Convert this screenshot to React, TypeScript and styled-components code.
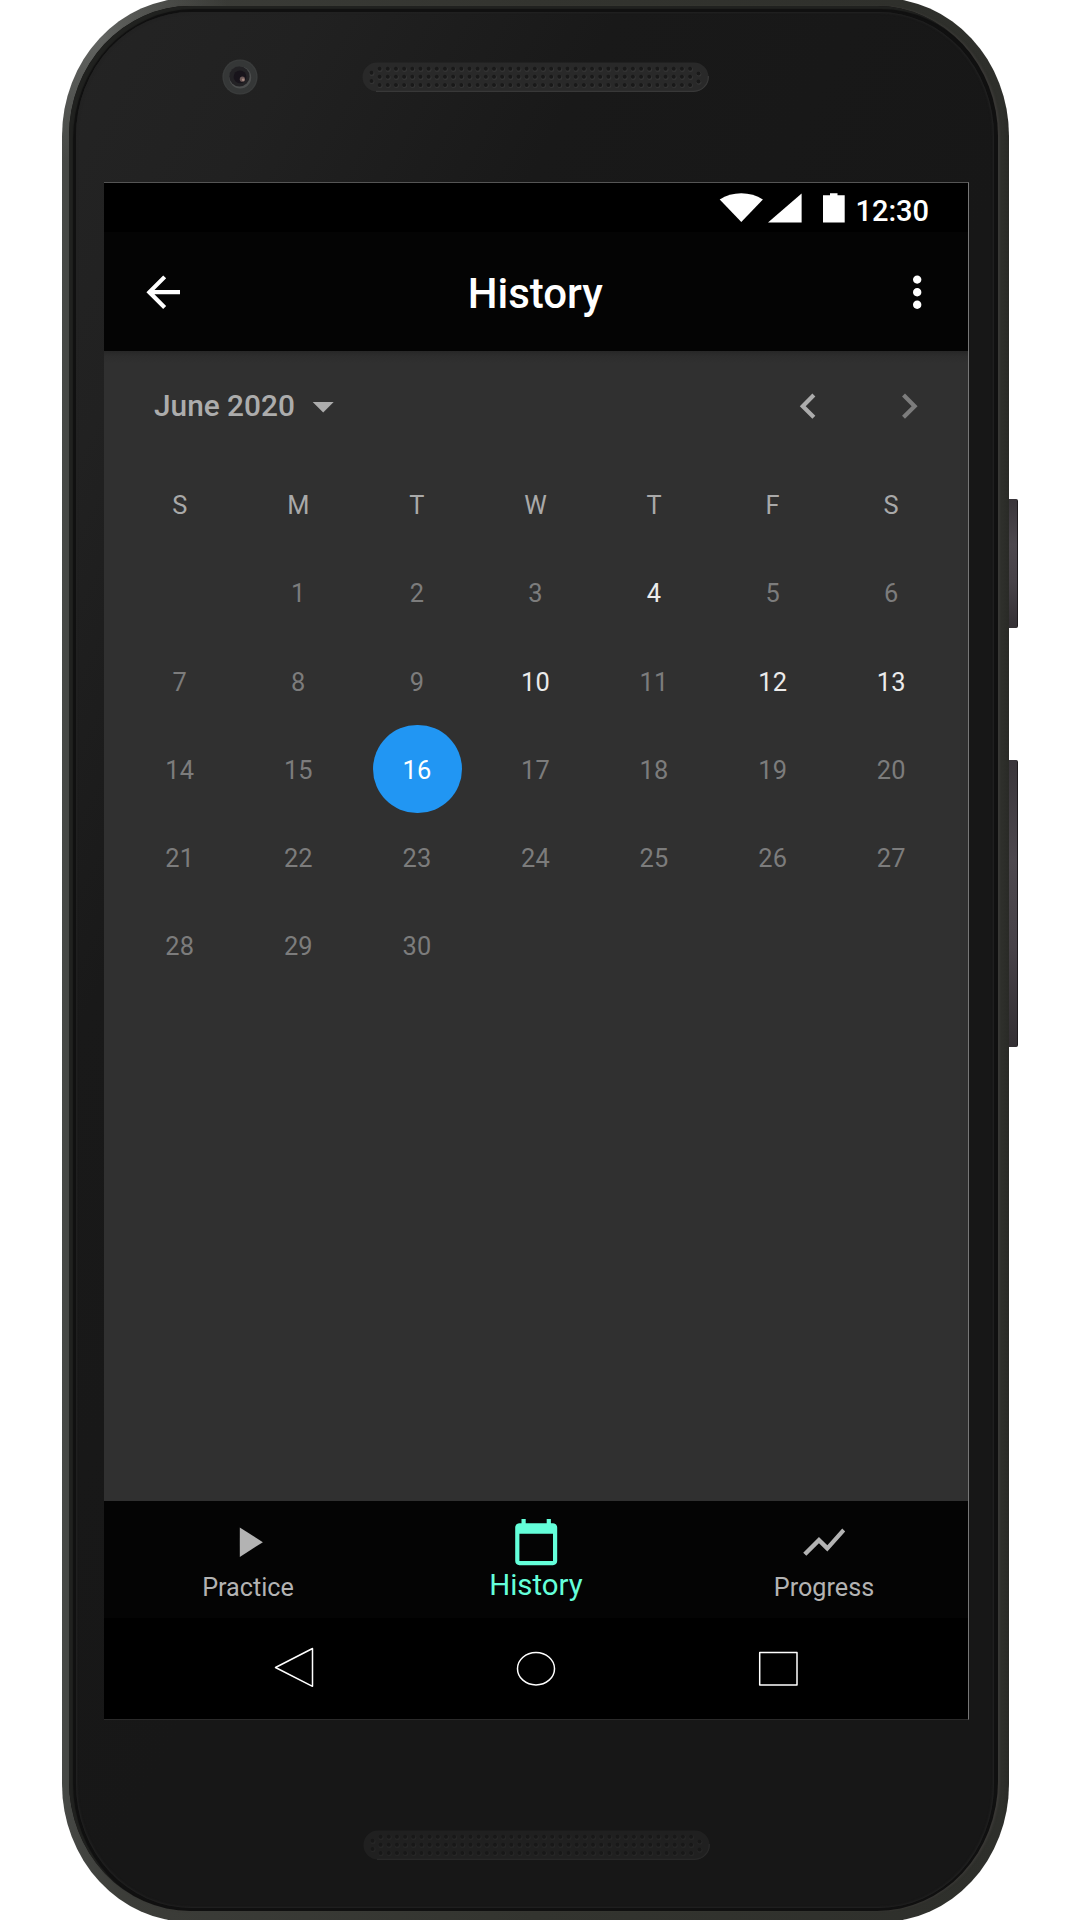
import React from "react";
import styled, { createGlobalStyle } from "styled-components";

const GlobalStyle = createGlobalStyle`
  * { box-sizing: border-box; }
  body { margin: 0; background: #fff; font-family: Roboto, "Noto Sans", sans-serif; }
`;

const Stage = styled.main`
  width: 1080px;
  height: 1920px;
  overflow: hidden;
  display: flex;
  align-items: flex-start;
  padding-left: 62px;
  background: #fff;
`;

const Shell = styled.div`
  width: 947px;
  height: 1924px;
  margin-top: -2px;
  flex: none;
  padding: 8px 11px 11px 7px;
  border-radius: 128px / 138px;
  background:
    radial-gradient(circle at 40px 40px, rgba(120, 122, 120, 0.6), rgba(90, 92, 90, 0) 130px),
    linear-gradient(90deg, #464845 0, #3c3d39 60px, #33342f 50%, #2e2f2b 99.3%, #292a26 100%);
`;

const Ring = styled.div`
  width: 100%;
  height: 100%;
  padding: 6px 4px 3px 7px;
  border-radius: 121px / 130px;
  background: #101010;
  box-shadow: inset 4px 3px 1px #20211f, 2px 0 2px rgba(66, 64, 61, 0.6);
`;

const Glass = styled.div`
  width: 100%;
  height: 100%;
  display: flex;
  flex-direction: column;
  padding-left: 28px;
  border-radius: 115px / 124px;
  background: linear-gradient(118deg, #242424 0, #212121 210px, #191919 480px, #171717 900px);
  box-shadow: inset 0 0 2px 1px #222;
`;

const Earpiece = styled.div`
  height: 170px;
  flex: none;
  display: flex;
  align-items: flex-start;
  padding: 46.7px 0 0 117.7px;
  gap: 104.8px;
`;

const Lens = styled.svg`
  width: 36px;
  height: 36px;
  flex: none;
`;

const GrillSvg = styled.svg<{ $dim?: boolean }>`
  width: 347px;
  height: 30px;
  margin-top: 3.300px;
  flex: none;
  opacity: ${(p) => (p.$dim ? 0.55 : 1)};
`;

const Chin = styled.div`
  flex: 1;
  padding: 106.5px 0 0 258.500px;
`;

const Screen = styled.div`
  width: 865px;
  height: 1538px;
  flex: none;
  display: flex;
  flex-direction: column;
  border-top: 1px solid #555;
  border-right: 1px solid #777;
  border-bottom: 1px solid #2a2a2a;
  background: #303030;
`;

const StatusBar = styled.div`
  height: 49px;
  display: flex;
  align-items: flex-start;
  justify-content: flex-end;
  padding: 10px 39px 0 0;
  background: #000;
  color: #fff;
`;

const StatusIcons = styled.svg`
  width: 126px;
  height: 30px;
  margin-right: 10px;
`;

const Clock = styled.span`
  font-size: 29px;
  font-weight: 500;
  line-height: 34px;
  padding-top: 1px;
`;

const AppBar = styled.header`
  height: 119px;
  display: grid;
  grid-template-columns: 50px 1fr 50px;
  align-items: center;
  padding: 2px 26px 0 33.5px;
  background: #040404;
  color: #fff;
`;

const Title = styled.h1`
  margin: 3px 0 0;
  padding-right: 9px;
  font-size: 42px;
  font-weight: 500;
  line-height: 50px;
  text-align: center;
`;

const Icon = styled.svg<{ $color?: string }>`
  display: block;
  width: 50.4px;
  height: 50.4px;
  flex: none;
  fill: ${(p) => p.$color || "#fff"};
`;

const Content = styled.section`
  height: 1150px;
  flex: none;
  padding: 0 17px;
  background: linear-gradient(180deg, #272727 0, #2d2d2d 5px, #303030 12px);
`;

const MonthBar = styled.div`
  height: 109.6px;
  display: flex;
  align-items: center;
  padding: 0 17px 0 33px;
`;

const Month = styled.span`
  width: 143.5px;
  font-size: 29.8px;
  font-weight: 500;
  line-height: 36px;
  color: #acacac;
  white-space: nowrap;
`;

const MonthArrows = styled.div`
  display: flex;
  gap: 50.4px;
  margin-left: auto;
`;

const Grid = styled.div`
  display: grid;
  grid-template-columns: repeat(7, 1fr);
  grid-auto-rows: 88.2px;
  place-items: center;
`;

type Tone = "head" | "off" | "on" | "picked";
const toneColor: Record<Tone, string> = {
  head: "#a9a9a9",
  off: "#7c7c7c",
  on: "#ebebeb",
  picked: "#fff",
};

const Day = styled.span<{ $tone: Tone }>`
  width: 88.4px;
  height: 88.4px;
  border-radius: 50%;
  display: flex;
  align-items: center;
  justify-content: center;
  padding: 1px 1px 0 0;
  font-size: 25.4px;
  letter-spacing: 0.2px;
  color: ${(p) => toneColor[p.$tone]};
  background: ${(p) => (p.$tone === "picked" ? "#2196f3" : "transparent")};
`;

const Tabs = styled.nav`
  height: 117px;
  display: grid;
  grid-template-columns: repeat(3, 1fr);
  background: #040404;
`;

const Tab = styled.div<{ $active?: boolean }>`
  display: flex;
  flex-direction: column;
  align-items: center;
  padding-top: 15.8px;
  font-size: ${(p) => (p.$active ? 29.4 : 25.2)}px;
  line-height: 36px;
  color: ${(p) => (p.$active ? "#64ffda" : "#b3b3b3")};
`;

const TabLabel = styled.span<{ $active?: boolean }>`
  margin-top: ${(p) => (p.$active ? -0.2 : 2.6)}px;
`;

const SystemBar = styled.div`
  flex: 1;
  display: flex;
  justify-content: center;
  gap: 202px;
  padding-top: 28px;
  background: #000;
`;

const SystemIcon = styled.svg`
  width: 40px;
  height: 44px;
  fill: none;
  stroke: #fff;
  stroke-width: 1.5;
  stroke-linejoin: round;
`;

const SideKeys = styled.div`
  width: 9px;
  display: flex;
  flex-direction: column;
  gap: 132px;
  padding-top: 498.5px;
`;

const SideKey = styled.div<{ $h: number }>`
  height: ${(p) => p.$h}px;
  border-radius: 0 2px 2px 0;
  border-right: 1px solid #1d1a1d;
  background: linear-gradient(180deg, #39353a 0, #4d484e 35%, #474248 65%, #332f33 100%);
`;

const WEEKDAYS = ["S", "M", "T", "W", "T", "F", "S"];
const PRACTICED = [4, 10, 12, 13];
const TODAY = 16;

const PATHS = {
  back: "M20 11H7.83l5.59-5.59L12 4l-8 8 8 8 1.41-1.41L7.83 13H20v-2z",
  more: "M12 8c1.1 0 2-.9 2-2s-.9-2-2-2-2 .9-2 2 .9 2 2 2zm0 2c-1.1 0-2 .9-2 2s.9 2 2 2 2-.9 2-2-.9-2-2-2zm0 6c-1.1 0-2 .9-2 2s.9 2 2 2 2-.9 2-2-.9-2-2-2z",
  down: "M7 10l5 5 5-5z",
  left: "M15.41 7.41L14 6l-6 6 6 6 1.41-1.41L10.83 12z",
  right: "M10 6L8.59 7.41 13.17 12l-4.58 4.59L10 18l6-6z",
  play: "M8 5v14l11-7z",
  calendar:
    "M20 3h-1V1h-2v2H7V1H5v2H4c-1.1 0-2 .9-2 2v16c0 1.1.9 2 2 2h16c1.1 0 2-.9 2-2V5c0-1.1-.9-2-2-2zm0 18H4V8h16v13z",
  chart: "M3.5 18.49l6-6.01 4 4L22 6.92l-1.41-1.41-7.09 7.97-4-4L2 16.99z",
};

const Glyph = ({ name, color }: { name: keyof typeof PATHS; color?: string }) => (
  <Icon viewBox="0 0 24 24" $color={color}>
    <path d={PATHS[name]} />
  </Icon>
);

const holes: [number, number][] = [
  [9.5, 10.7],
  [9.5, 18.9],
  [336.5, 11.4],
  [336.5, 19.5],
];
for (let c = 0; c < 39; c++) {
  for (let r = 0; r < 3; r++) holes.push([17.6 + c * 8.17, 6.7 + r * 8.1]);
}

const Grill = ({ dim }: { dim?: boolean }) => (
  <GrillSvg viewBox="0 0 347 30" $dim={dim}>
    <rect x="0.5" y="0.5" width="346" height="29" rx="14.5" fill="#292929" />
    <path d="M14 29.3H332A14.5 14.5 0 0 0 346.3 14" fill="none" stroke="#383838" strokeWidth="1.2" />
    {holes.map(([x, y], i) => (
      <g key={i}>
        <circle cx={x + 0.4} cy={y + 0.7} r="2.5" fill="#353535" />
        <circle cx={x} cy={y} r="2" fill="#191919" />
      </g>
    ))}
  </GrillSvg>
);

export default function App() {
  return (
    <>
      <GlobalStyle />
      <Stage>
        <Shell>
          <Ring>
            <Glass>
              <Earpiece>
                <Lens viewBox="0 0 36 36">
                  <circle cx="18" cy="18" r="17.6" fill="#3a3c3c" />
                  <circle cx="18" cy="18" r="16.2" fill="#353737" />
                  <circle cx="18.2" cy="18.4" r="11" fill="#4c4e4e" />
                  <circle cx="17.4" cy="17.4" r="10.2" fill="#232225" />
                  <circle cx="18" cy="17.8" r="6.4" fill="#18141b" />
                  <circle cx="20.4" cy="20.2" r="2.6" fill="#6e5a58" />
                  <circle cx="21.2" cy="20.8" r="1.3" fill="#a88c84" />
                </Lens>
                <Grill />
              </Earpiece>
              <Screen>
                <StatusBar>
                  <StatusIcons viewBox="0 0 126 30" fill="#fff">
                    <path d="M0.7 6.4C13-1.7 31.5-1.7 43.9 6.4L22.3 29z" />
                    <path d="M49 29.4L82.6 0.5V29.4z" />
                    <path d="M104 2.2H111V0.3H118.5V2.2H125.7V29.4H104z" />
                  </StatusIcons>
                  <Clock>12:30</Clock>
                </StatusBar>
                <AppBar>
                  <Glyph name="back" />
                  <Title>History</Title>
                  <Glyph name="more" />
                </AppBar>
                <Content>
                  <MonthBar>
                    <Month>June 2020</Month>
                    <Glyph name="down" color="#acacac" />
                    <MonthArrows>
                      <Glyph name="left" color="#acacac" />
                      <Glyph name="right" color="#7c7c7c" />
                    </MonthArrows>
                  </MonthBar>
                  <Grid>
                    {WEEKDAYS.map((d, i) => (
                      <Day key={`w${i}`} $tone="head">
                        {d}
                      </Day>
                    ))}
                    <Day $tone="off" />
                    {Array.from({ length: 30 }, (_, i) => i + 1).map((d) => (
                      <Day
                        key={d}
                        $tone={d === TODAY ? "picked" : PRACTICED.includes(d) ? "on" : "off"}
                      >
                        {d}
                      </Day>
                    ))}
                  </Grid>
                </Content>
                <Tabs>
                  <Tab>
                    <Glyph name="play" color="#b3b3b3" />
                    <TabLabel>Practice</TabLabel>
                  </Tab>
                  <Tab $active>
                    <Glyph name="calendar" color="#64ffda" />
                    <TabLabel $active>History</TabLabel>
                  </Tab>
                  <Tab>
                    <Glyph name="chart" color="#b3b3b3" />
                    <TabLabel>Progress</TabLabel>
                  </Tab>
                </Tabs>
                <SystemBar>
                  <SystemIcon viewBox="0 0 40 44">
                    <path d="M1.5 21.5L38.5 2.5V40.3z" />
                  </SystemIcon>
                  <SystemIcon viewBox="0 0 40 44">
                    <ellipse cx="20" cy="22.7" rx="18.5" ry="16.2" />
                  </SystemIcon>
                  <SystemIcon viewBox="0 0 40 44">
                    <rect x="1.7" y="6.5" width="37.3" height="32.4" />
                  </SystemIcon>
                </SystemBar>
              </Screen>
              <Chin>
                <Grill dim />
              </Chin>
            </Glass>
          </Ring>
        </Shell>
        <SideKeys>
          <SideKey $h={129.5} />
          <SideKey $h={287} />
        </SideKeys>
      </Stage>
    </>
  );
}
